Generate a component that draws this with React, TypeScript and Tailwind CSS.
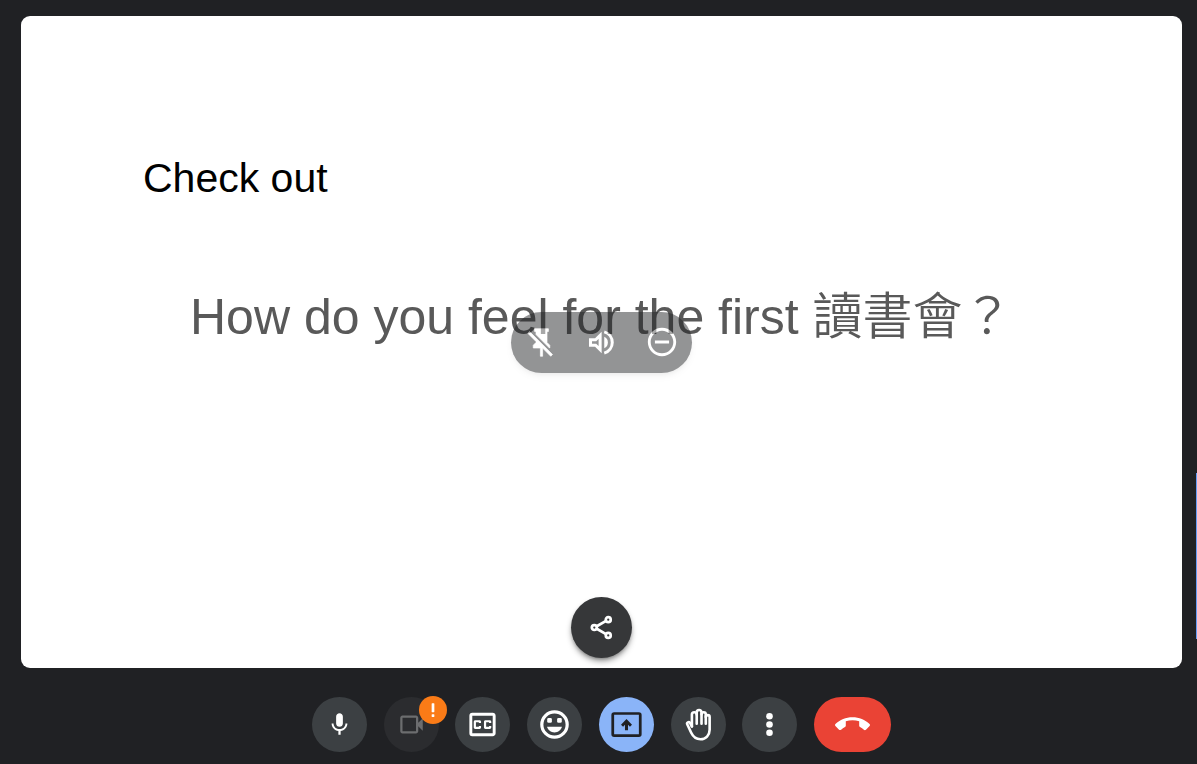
import { ReactNode } from "react";
import clsx from "clsx";
import { MdCallEnd, MdMic, MdOutlineClosedCaption, MdRemoveCircleOutline } from "react-icons/md";

const Icon = ({ size, children }: { size: number; children: ReactNode }) => (
  <svg width={size} height={size} viewBox="0 0 24 24" fill="currentColor" aria-hidden="true">
    {children}
  </svg>
);

const PinOffIcon = () => (
  <Icon size={33}>
    <path
      stroke="currentColor"
      strokeWidth="0.5"
      d="M2 5.27 3.28 4 20 20.72 18.73 22l-5.93-5.93V22h-1.6v-6H6v-2l2-2v-.73l-6-6ZM16 12l2 2v2h-.18L8 6.18V4H7V2h10v2h-1v8Z"
    />
  </Icon>
);

const VolumeIcon = () => (
  <Icon size={33}>
    <g fill="none" stroke="currentColor" strokeWidth="2.2">
      <path d="M4 10v4h3.7l3.3 3.2V6.8L7.7 10Z" />
      <path d="M14 4.3a8 8 0 0 1 0 15.4" />
    </g>
    <path d="M14 7.9a4.5 4.5 0 0 1 0 8.2Z" />
  </Icon>
);

const ShareIcon = () => (
  <Icon size={27}>
    <g fill="none" stroke="currentColor" strokeWidth="2.4">
      <circle cx="5.6" cy="12" r="2.2" />
      <circle cx="18" cy="5" r="2.2" />
      <circle cx="18" cy="19" r="2.2" />
      <path d="m7.8 10.9 8.2-4.8M7.8 13.1l8.2 4.8" />
    </g>
  </Icon>
);

const CameraIcon = () => (
  <Icon size={27}>
    <path d="M18 10.48V6c0-1.1-.9-2-2-2H4c-1.1 0-2 .9-2 2v12c0 1.1.9 2 2 2h12c1.1 0 2-.9 2-2v-4.48l4 3.98v-11l-4 3.98ZM16 18H4V6h12v12Z" />
  </Icon>
);

const SmileIcon = () => (
  <Icon size={35}>
    <circle cx="12" cy="12" r="8.7" fill="none" stroke="currentColor" strokeWidth="2.2" />
    <rect x="7" y="7.6" width="3.2" height="3.2" rx="0.9" />
    <rect x="13.8" y="7.6" width="3.2" height="3.2" rx="0.9" />
    <path d="M6.9 13.6h10.2c-.6 2.3-2.6 3.9-5.1 3.9s-4.5-1.6-5.1-3.9Z" />
  </Icon>
);

const PresentIcon = () => (
  <Icon size={33}>
    <path d="M21 3H3a2 2 0 0 0-2 2v14a2 2 0 0 0 2 2h18a2 2 0 0 0 2-2V5a2 2 0 0 0-2-2Zm0 16.1H3V4.9h18v14.2Z" />
    <path d="M10.9 16.2v-4l-1.4 1.4L8 12.1l4-4.1 4 4.1-1.5 1.5-1.4-1.4v4h-2.2Z" />
  </Icon>
);

const HandIcon = () => (
  <Icon size={33}>
    <g fill="none" stroke="currentColor" strokeWidth="1.9" strokeLinecap="round" strokeLinejoin="round">
      <path d="M7.2 13.4V4.8a1.75 1.75 0 0 1 3.5 0v6.7" />
      <path d="M10.7 4.8V3.2a1.75 1.75 0 0 1 3.5 0v8.3" />
      <path d="M14.2 4.6a1.55 1.55 0 0 1 3.1 0v6.9" />
      <path d="M17.3 6.6a1.4 1.4 0 0 1 2.8 0v9.2c0 4-2.8 6.9-6.6 6.9-3.3 0-5.3-1.5-6.8-4.7l-2.9-6.2c-.5-1.2 1.1-2.1 2-1l1.4 2.6" />
    </g>
  </Icon>
);

const MoreIcon = () => (
  <Icon size={33}>
    <circle cx="12" cy="6" r="2.4" />
    <circle cx="12" cy="12" r="2.4" />
    <circle cx="12" cy="18" r="2.4" />
  </Icon>
);

type ControlProps = {
  label: string;
  className?: string;
  children: ReactNode;
};

const Control = ({ label, className, children }: ControlProps) => (
  <button
    type="button"
    aria-label={label}
    className={clsx(
      "relative flex h-[55px] items-center justify-center rounded-full",
      className ?? "w-[55px] bg-[#3c4043] text-white"
    )}
  >
    {children}
  </button>
);

const Slide = () => (
  <section className="relative flex-1 rounded-[9px] bg-white pt-[138px] font-['Liberation_Sans','Noto_Sans_CJK_TC',sans-serif]">
    <h1 className="pl-[122px] text-[41px] leading-12 text-black">Check out</h1>
    <p className="mt-[78px] pl-[169px] text-[50px] leading-16 text-[#595959]">
      How do you feel for the first{" "}
      <span lang="zh-TW" className="font-['Noto_Sans_CJK_TC',sans-serif] font-[350]">
        讀書會？
      </span>
    </p>
    <div className="absolute inset-0 flex items-center justify-center">
      <div className="flex w-[181px] justify-between rounded-full bg-[#202124] text-white opacity-[0.48] shadow-md">
        <button type="button" aria-label="Unpin" className="flex h-[61px] w-[60px] items-center justify-center">
          <PinOffIcon />
        </button>
        <button type="button" aria-label="Volume" className="flex h-[61px] w-[60px] items-center justify-center">
          <VolumeIcon />
        </button>
        <button type="button" aria-label="Remove" className="flex h-[61px] w-[60px] items-center justify-center">
          <MdRemoveCircleOutline size={34} />
        </button>
      </div>
    </div>
    <div className="absolute inset-x-0 bottom-[10px] flex justify-center">
      <button
        type="button"
        aria-label="Share"
        className="flex size-[61px] items-center justify-center rounded-full bg-[#363739] text-white shadow-md shadow-black/40"
      >
        <ShareIcon />
      </button>
    </div>
  </section>
);

const App = () => {
  return (
    <main className="relative flex min-h-screen flex-col bg-[#202124] pt-4 pr-[15px] pb-3 pl-[21px]">
      <Slide />
      <nav className="mx-auto mt-[29px] flex w-[579px] justify-between">
        <Control label="Microphone">
          <MdMic size={27} />
        </Control>
        <Control label="Camera" className="w-[55px] bg-[#2b2c2f] text-[#6c6d6f]">
          <CameraIcon />
          <span className="absolute -top-px -right-2 flex size-7 items-center justify-center rounded-full bg-[#fa7b17] text-white">
            <Icon size={18}>
              <rect x="10.2" y="3" width="3.6" height="12" rx="0.6" />
              <rect x="10.2" y="17.8" width="3.6" height="3.4" rx="0.6" />
            </Icon>
          </span>
        </Control>
        <Control label="Captions">
          <MdOutlineClosedCaption size={35} />
        </Control>
        <Control label="Reactions">
          <SmileIcon />
        </Control>
        <Control label="Present now" className="w-[55px] bg-[#8ab4f8] text-[#202124]">
          <PresentIcon />
        </Control>
        <Control label="Raise hand">
          <HandIcon />
        </Control>
        <Control label="More options">
          <MoreIcon />
        </Control>
        <Control label="Leave call" className="w-[77px] bg-[#ea4335] text-white">
          <MdCallEnd size={35} />
        </Control>
      </nav>
      <div className="absolute right-0 bottom-[125px] h-[166px] w-px bg-[#669df6]" />
    </main>
  );
};

export default App;
